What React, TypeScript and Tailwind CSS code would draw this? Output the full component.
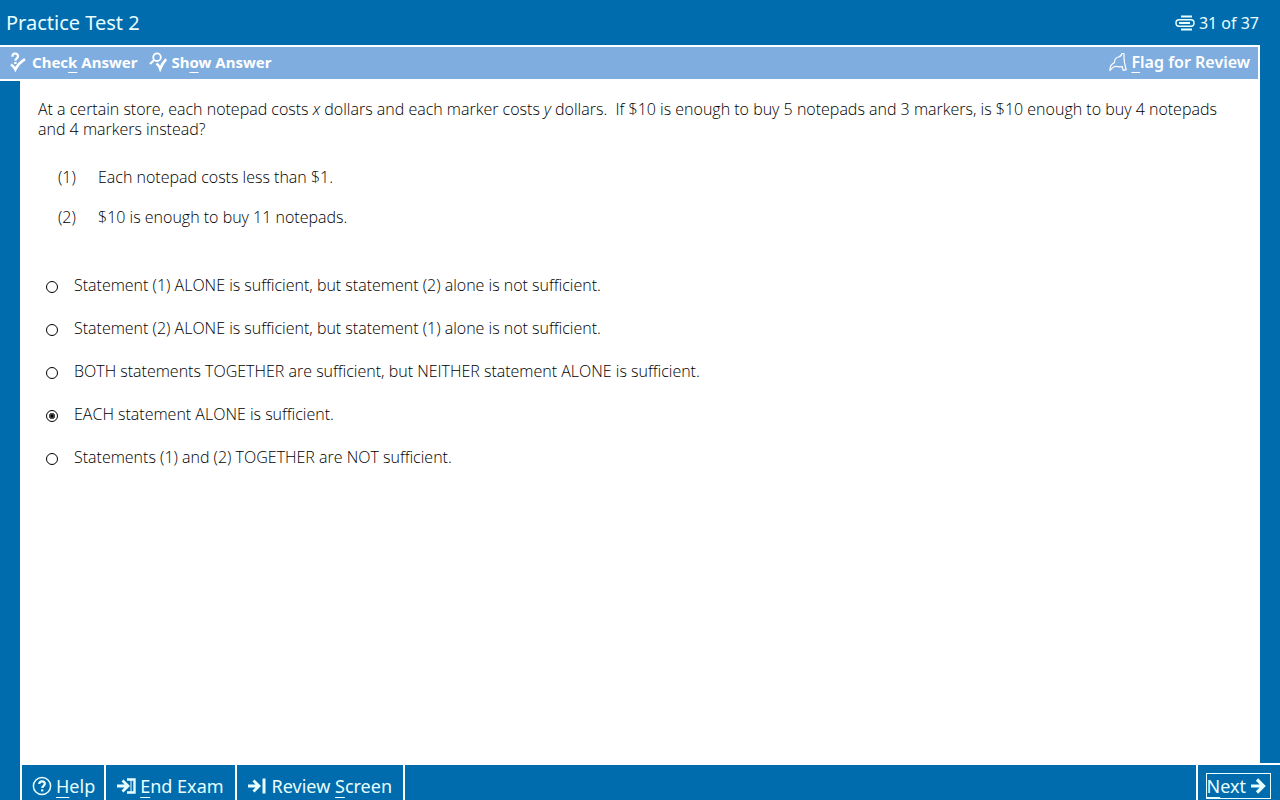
import React, { useState } from 'react'

const statements = ['Each notepad costs less than $1.', '$10 is enough to buy 11 notepads.']

const choices = [
  'Statement (1) ALONE is sufficient, but statement (2) alone is not sufficient.',
  'Statement (2) ALONE is sufficient, but statement (1) alone is not sufficient.',
  'BOTH statements TOGETHER are sufficient, but NEITHER statement ALONE is sufficient.',
  'EACH statement ALONE is sufficient.',
  'Statements (1) and (2) TOGETHER are NOT sufficient.',
]

// label with one underlined shortcut letter
const HotkeyLabel: React.FC<{ text: string; index: number }> = ({ text, index }) => (
  <span className="whitespace-pre">
    {text.slice(0, index)}
    <span className="underline decoration-1 underline-offset-4 [text-decoration-skip-ink:none]">
      {text[index]}
    </span>
    {text.slice(index + 1)}
  </span>
)

const CheckAnswerIcon = () => (
  <svg className="w-4 h-5" viewBox="0 0 16 20" fill="none" stroke="currentColor" aria-hidden={true}>
    <path d="M2.4 4.8C2.4 2.6 3.4 1.5 5 1.5S8 2.6 8 4.2C8 6.4 5.4 6.3 5.4 8.8" strokeWidth="2.2" />
    <path d="M4.2 11h2.4" strokeWidth="2" />
    <path d="M1 12.5C3 14 4.4 15.4 5.4 17.5C7.6 13.2 10.8 9.8 15 7.2" strokeWidth="2.6" />
  </svg>
)

const ShowAnswerIcon = () => (
  <svg className="w-[18px] h-5" viewBox="0 0 18 20" fill="none" stroke="currentColor" aria-hidden={true}>
    <circle cx="8" cy="5.2" r="3.8" strokeWidth="1.8" />
    <path d="M5.2 8L1 12" strokeWidth="2.2" />
    <path d="M7.5 11.5C9.2 12.8 10.4 14.4 11.2 16.8C12.6 13 14.6 9.8 17.2 7.2" strokeWidth="2.6" />
  </svg>
)

const FlagIcon = () => (
  <svg className="w-[18px] h-5" viewBox="0 0 18 20" fill="none" stroke="currentColor" aria-hidden={true}>
    <path
      d="M1 18.5C0.8 14.8 2.4 12 5.4 10.6C5.6 7.4 7 5.4 9.4 5C11.4 4.8 12.4 3.6 13 1.5H15V6C15 10 16 13 17.2 17.6L14.2 18.4L13.2 14.4C10.6 16 7.6 13.4 5 14.8C3.4 15.6 2.2 17 1 18.5Z"
      strokeWidth="1.2"
      strokeLinejoin="round"
    />
  </svg>
)

const ProgressIcon = () => (
  <svg className="w-5 h-4" viewBox="0 0 20 16" fill="none" stroke="currentColor" aria-hidden={true}>
    <path d="M6 1.5h11M6 14.5h11" strokeWidth="2" />
    <rect x="1" y="4.7" width="18" height="6.6" rx="3" strokeWidth="1.4" />
    <path d="M4 8h11" strokeWidth="2" />
  </svg>
)

const HelpIcon = () => (
  <svg className="w-5 h-5" viewBox="0 0 20 20" fill="none" stroke="currentColor" aria-hidden={true}>
    <circle cx="10" cy="10" r="8.6" strokeWidth="1.5" />
    <path d="M7.2 8C7.2 6.2 8.4 5.3 10 5.3S12.8 6.3 12.8 7.8C12.8 9.8 10.2 9.8 10.2 12" strokeWidth="2.2" />
    <path d="M9 14.4h2.4" strokeWidth="2" />
  </svg>
)

const EndExamIcon = () => (
  <svg className="w-[19px] h-4" viewBox="0 0 19 16" fill="none" stroke="currentColor" aria-hidden={true}>
    <path d="M0 8h11M5.5 2.5L11 8l-5.5 5.5" strokeWidth="2.8" />
    <path d="M10 1.5h7.5v13H10" strokeWidth="2.4" />
    <path d="M14 2v12" strokeWidth="1" />
  </svg>
)

const ReviewIcon = () => (
  <svg className="w-[18px] h-4" viewBox="0 0 18 16" fill="none" stroke="currentColor" aria-hidden={true}>
    <path d="M0 8h11M5.5 2.5L11 8l-5.5 5.5" strokeWidth="2.8" />
    <path d="M16 0.5v15" strokeWidth="3" />
  </svg>
)

const NextIcon = () => (
  <svg className="w-4 h-4" viewBox="0 0 16 16" fill="none" stroke="currentColor" aria-hidden={true}>
    <path d="M1 8h12M7 1.5L13.5 8L7 14.5" strokeWidth="3.2" />
  </svg>
)

export default function App() {
  const [selected, setSelected] = useState(3)

  return (
    <div className="flex min-h-screen flex-col bg-[#006cad] font-['Noto_Sans',sans-serif] text-base">
      <header className="flex h-[45px] items-center justify-between pl-[6px] pr-[21px] text-[#e8ffff]">
        <h1 className="text-xl">Practice Test 2</h1>
        <div className="flex items-center gap-1">
          <ProgressIcon />
          <span>31 of 37</span>
        </div>
      </header>

      <div className="mr-5 flex h-9 items-center justify-between border-y-2 border-r-2 border-white bg-[#80ade0] pb-[2px] pl-[10px] pr-2 text-[15px] font-bold text-white">
        <div className="flex gap-3">
          <button type="button" className="flex items-center gap-[6px]">
            <CheckAnswerIcon />
            <HotkeyLabel text="Check Answer" index={4} />
          </button>
          <button type="button" className="flex items-center gap-1">
            <ShowAnswerIcon />
            <HotkeyLabel text="Show Answer" index={2} />
          </button>
        </div>
        <button type="button" className="flex items-center gap-1 text-base font-semibold">
          <FlagIcon />
          <HotkeyLabel text="Flag for Review" index={0} />
        </button>
      </div>

      <main className="mx-5 flex-1 bg-white px-[18px] pt-[18px] font-['Open_Sans',sans-serif] font-light text-black">
        <p className="leading-5">
          At a certain store, each notepad costs <i>x</i> dollars and each marker costs <i>y</i>{' '}
          dollars.&nbsp; If $10 is enough to buy 5 notepads and 3 markers, is $10 enough to buy 4
          notepads and 4 markers instead?
        </p>
        <ol className="mt-7 flex flex-col gap-5 pl-5 leading-5">
          {statements.map((s, i) => (
            <li key={s} className="flex">
              <span className="w-10">({i + 1})</span>
              <span>{s}</span>
            </li>
          ))}
        </ol>
        <fieldset className="mt-12 flex flex-col gap-[23px] pl-2">
          {choices.map((c, i) => (
            <label key={c} className="flex items-center gap-4 leading-5">
              <input
                type="radio"
                name="answer"
                checked={selected === i}
                onChange={() => setSelected(i)}
                className="mt-1 size-3 shrink-0 appearance-none rounded-full border border-black bg-white checked:bg-[radial-gradient(circle,black_1px,#555_2px,#555_3px,white_3px)]"
              />
              <span>{c}</span>
            </label>
          ))}
        </fieldset>
      </main>

      <footer className="ml-5 flex h-[37px] border-l-2 border-t-2 border-white text-lg text-[#e8ffff]">
        <button type="button" className="flex items-center gap-1 border-r-2 border-white pl-[10px] pr-[9px] pt-[6px]">
          <HelpIcon />
          <HotkeyLabel text="Help" index={0} />
        </button>
        <button type="button" className="flex items-center gap-1 border-r-2 border-white px-[11px] pt-[6px]">
          <EndExamIcon />
          <HotkeyLabel text="End Exam" index={0} />
        </button>
        <button type="button" className="flex items-center gap-[6px] border-r-2 border-white px-[11px] pt-[6px]">
          <ReviewIcon />
          <HotkeyLabel text="Review Screen" index={7} />
        </button>
        <div className="ml-auto flex items-center border-l-2 border-white pl-2 pr-[9px] pt-[6px]">
          <button type="button" className="flex h-[26px] items-center gap-1 border border-[#e8ffff] pr-1">
            <HotkeyLabel text="Next" index={0} />
            <NextIcon />
          </button>
        </div>
      </footer>
    </div>
  )
}
